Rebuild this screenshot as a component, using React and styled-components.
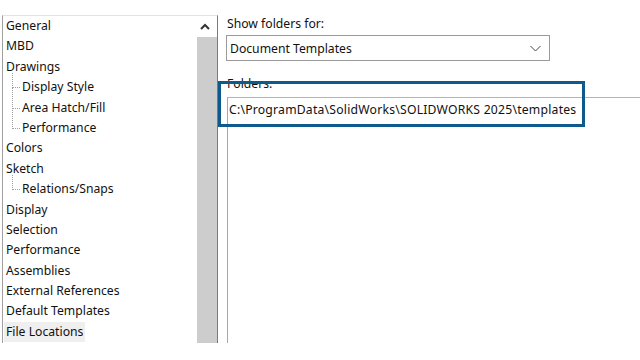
import React from 'react';
import styled, { createGlobalStyle } from 'styled-components';

const Global = createGlobalStyle`
  html, body { margin: 0; padding: 0; background: #fff; }
  body { font-family: "Noto Sans", "Open Sans", sans-serif; font-size: 12.2px; color: #111; }
`;

const Page = styled.div`
  width: 640px;
  height: 360px;
  display: flex;
  position: relative;
  overflow: hidden;
  background: #fff;
`;

const TreePanel = styled.div`
  margin: 15px 0 0 2px;
  width: 214px;
  height: 327px;
  border-top: 1px solid #e3e3e3;
  border-left: 1px solid #a0a0a0;
  border-right: 1px solid #7a7a7a;
  display: flex;
`;

const TreeList = styled.ul`
  flex: 1;
  list-style: none;
  margin: 0;
  padding: 0;
`;

const Item = styled.li`
  height: 20.4px;
  line-height: 20px;
  position: relative;
  padding-left: ${p => (p.$child ? '17px' : '1px')};
  white-space: nowrap;
  span {
    display: inline-block;
    padding: 0 2px;
    background: ${p => (p.$selected ? '#efefef' : 'transparent')};
  }
`;

const Branch = styled.i`
  position: absolute;
  left: 9px;
  top: ${p => (p.$first ? '-4px' : '-10px')};
  width: 7px;
  height: ${p => (p.$first ? '14px' : '20px')};
  border-left: 1px dotted #a0a0a0;
  border-bottom: 1px dotted #a0a0a0;
`;

const ScrollBar = styled.div`
  width: 20px;
  background: #cdcdcd;
  display: flex;
  flex-direction: column;
`;

const ArrowBtn = styled.div`
  height: 21px;
  background: #fff;
  display: flex;
  align-items: center;
  justify-content: center;
  padding-right: 4px;
`;

const Settings = styled.div`
  flex: 1;
  padding: 15px 0 17px 9px;
  display: flex;
  flex-direction: column;
`;

const Label = styled.div`
  line-height: 17px;
`;

const Select = styled.div`
  margin-top: 3px;
  height: 24px;
  border: 1px solid #9a9a9a;
  display: flex;
  align-items: center;
  justify-content: space-between;
  padding: 0 8px 0 3px;
  box-sizing: content-box;
  width: 311px;
  margin-left: -1px;
`;

const FoldersLabel = styled(Label)`
  margin-top: 14px;
`;

const FolderList = styled.div`
  margin-top: 5px;
  flex: 1;
  border-top: 1px solid #b5b5b5;
  border-left: 1px solid #a8a8a8;
  padding: 3px 0 0 1px;
  letter-spacing: 0.22px;
`;

const Highlight = styled.div`
  position: absolute;
  left: 218px;
  top: 81px;
  width: 361px;
  height: 40px;
  border: 3px solid #0e5a8c;
  pointer-events: none;
`;

const tree = [
  { t: 'General' },
  { t: 'MBD' },
  { t: 'Drawings' },
  { t: 'Display Style', c: true, first: true },
  { t: 'Area Hatch/Fill', c: true },
  { t: 'Performance', c: true },
  { t: 'Colors' },
  { t: 'Sketch' },
  { t: 'Relations/Snaps', c: true, first: true },
  { t: 'Display' },
  { t: 'Selection' },
  { t: 'Performance' },
  { t: 'Assemblies' },
  { t: 'External References' },
  { t: 'Default Templates' },
  { t: 'File Locations', sel: true },
];

export default function App() {
  return (
    <Page>
      <Global />
      <TreePanel>
        <TreeList>
          {tree.map((it, i) => (
            <Item key={i} $child={it.c} $selected={it.sel}>
              {it.c && <Branch $first={it.first} />}
              <span>{it.t}</span>
            </Item>
          ))}
        </TreeList>
        <ScrollBar>
          <ArrowBtn>
            <svg width="10" height="7" viewBox="0 0 10 7">
              <path d="M1 6 L5 2 L9 6" fill="none" stroke="#333" strokeWidth="2" />
            </svg>
          </ArrowBtn>
        </ScrollBar>
      </TreePanel>
      <Settings>
        <Label>Show folders for:</Label>
        <Select>
          <span>Document Templates</span>
          <svg width="11" height="7" viewBox="0 0 11 7">
            <path d="M0.5 1 L5.5 6 L10.5 1" fill="none" stroke="#444" strokeWidth="1" />
          </svg>
        </Select>
        <FoldersLabel>Folders:</FoldersLabel>
        <FolderList>C:\ProgramData\SolidWorks\SOLIDWORKS 2025\templates</FolderList>
      </Settings>
      <Highlight />
    </Page>
  );
}
